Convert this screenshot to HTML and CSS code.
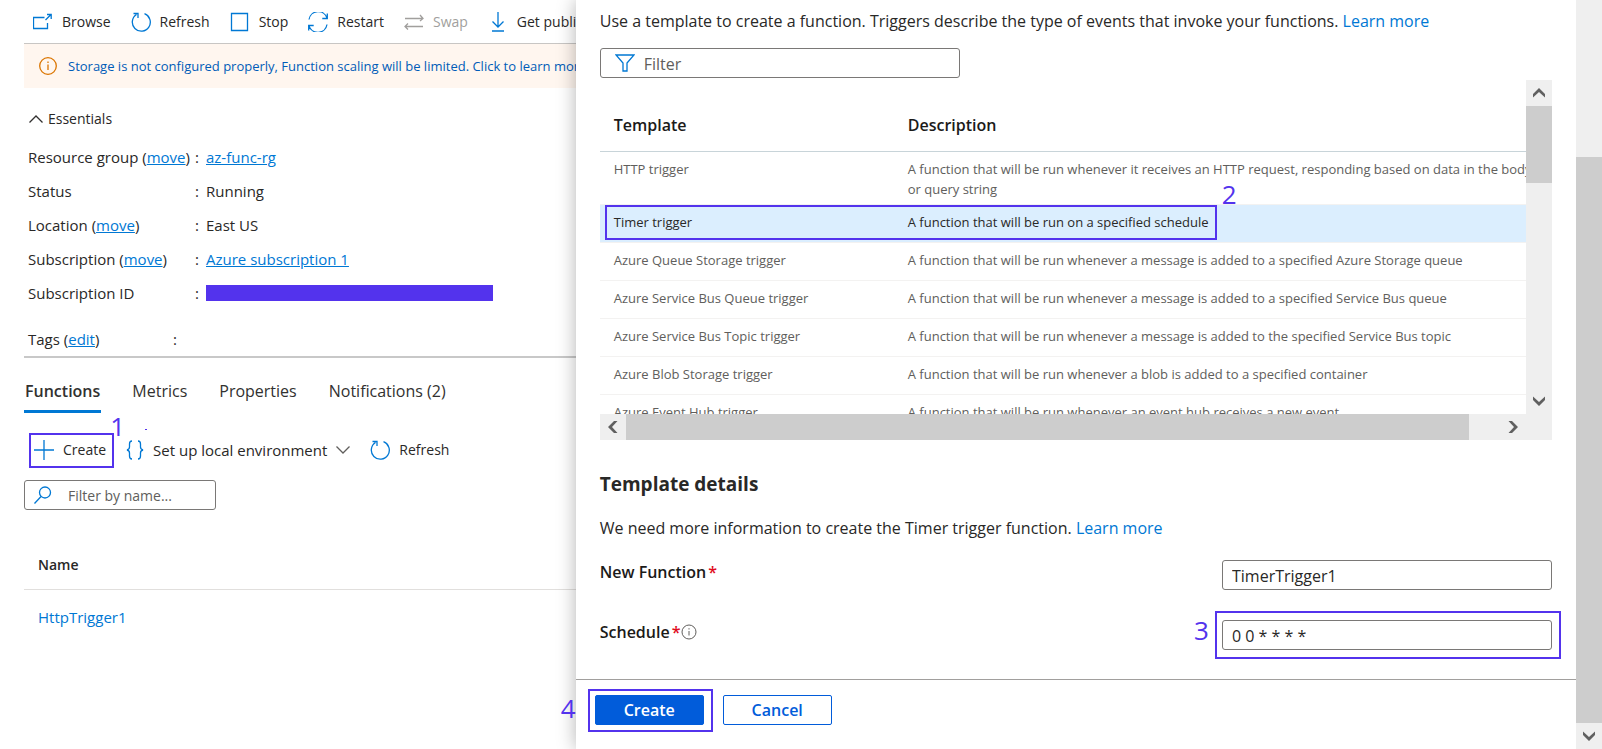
FILE: index.html
```
<!DOCTYPE html>
<html lang="en">
<head>
    <meta charset="UTF-8">
    <meta name="viewport" content="width=device-width, initial-scale=1.0">
    <title>Create function</title>
    <link rel="stylesheet" href="styles.css">
</head>
<body>
    <main class="overview">
        <div class="toolbar">
            <button class="command">
                <svg width="20" height="20" viewBox="0 0 20 20"><path d="M11.500 5.500H.500v11h14V11M12.500 8 18 2.500M14 2.500h4.200V7"/></svg>
                Browse
            </button>
            <button class="command">
                <svg width="20" height="20" viewBox="0 0 20 20"><path d="M13.500 1.700A9 9 0 1 1 5.500 2.500M2.500 1.500h4.500V6"/></svg>
                Refresh
            </button>
            <button class="command">
                <svg width="20" height="20" viewBox="0 0 20 20"><path d="M1.500 1.500h16v17h-16z"/></svg>
                Stop
            </button>
            <button class="command">
                <svg width="20" height="20" viewBox="0 0 20 20"><path d="M1 7.500a9.300 9.300 0 0 1 18-1.500M19.300 1.500V6.500h-5M19 12.500a9.300 9.300 0 0 1-18 1.500M.700 18.500V13.500h5"/></svg>
                Restart
            </button>
            <button class="command" disabled>
                <svg width="20" height="20" viewBox="0 0 20 20"><path d="M1 6.500h18M16 3l3 3.500L16 9M19 14.500H1M4 11.500l-3 3 3 3"/></svg>
                Swap
            </button>
            <button class="command">
                <svg width="20" height="20" viewBox="0 0 20 20"><path d="M10 0v15M4.500 9.500 10 15l5.500-5.500M4 19h12"/></svg>
                Get publish profile
            </button>
        </div>

        <div class="banner">
            <svg width="18" height="18" viewBox="0 0 18 18"><circle cx="9" cy="9" r="8.300"/><path d="M9 7.500V13M9 4.500v1.500"/></svg>
            <a href="#">Storage is not configured properly, Function scaling will be limited. Click to learn more</a>
        </div>

        <button class="essentials-toggle">
            <svg width="14" height="8" viewBox="0 0 14 8"><path d="M.5 7.500 7 1l6.500 6.500"/></svg>
            Essentials
        </button>
        <dl class="essentials">
            <dt>Resource group (<a href="#">move</a>)</dt>
            <dd><a href="#">az-func-rg</a></dd>
            <dt>Status</dt>
            <dd>Running</dd>
            <dt>Location (<a href="#">move</a>)</dt>
            <dd>East US</dd>
            <dt>Subscription (<a href="#">move</a>)</dt>
            <dd><a href="#">Azure subscription 1</a></dd>
            <dt>Subscription ID</dt>
            <dd><span class="redacted"></span></dd>
        </dl>
        <dl class="essentials tags">
            <dt>Tags (<a href="#">edit</a>)</dt>
            <dd></dd>
        </dl>

        <nav class="tabs">
            <a class="active" href="#">Functions</a>
            <a href="#">Metrics</a>
            <a href="#">Properties</a>
            <a href="#">Notifications (2)</a>
        </nav>

        <div class="toolbar functions-toolbar">
            <button class="command create">
                <svg width="20" height="20" viewBox="0 0 20 20"><path d="M10 0v20M0 10h20"/></svg>
                Create
                <span class="frame"></span>
                <span class="step">1</span>
            </button>
            <button class="command setup">
                <svg width="18" height="20" viewBox="0 0 18 20"><path d="M6 1C4 1 3.500 2 3.500 4v3c0 1.500-.5 2.500-2.500 3 2 .5 2.500 1.500 2.500 3v3c0 2 .5 3 2.500 3M12 1c2 0 2.500 1 2.500 3v3c0 1.500.5 2.500 2.500 3-2 .5-2.500 1.500-2.500 3v3c0 2-.5 3-2.500 3"/></svg>
                Set up local environment
                <svg class="chevron" width="14" height="8" viewBox="0 0 14 8"><path d="M.5.500 7 7 13.500.500"/></svg>
                <span class="speck"></span>
            </button>
            <button class="command">
                <svg width="20" height="20" viewBox="0 0 20 20"><path d="M13.500 1.700A9 9 0 1 1 5.500 2.500M2.500 1.500h4.500V6"/></svg>
                Refresh
            </button>
        </div>

        <label class="search">
            <svg width="18" height="18" viewBox="0 0 18 18"><circle cx="11" cy="6.500" r="5.500"/><path d="M7 10.500.500 17.500"/></svg>
            <input type="text" placeholder="Filter by name..." aria-label="Filter by name">
        </label>

        <table class="functions">
            <thead>
                <tr><th>Name</th></tr>
            </thead>
            <tbody>
                <tr><td><a href="#">HttpTrigger1</a></td></tr>
            </tbody>
        </table>
    </main>

    <section class="panel">
        <div class="panel-body">
            <p class="intro">Use a template to create a function. Triggers describe the type of events that invoke your functions. <a href="#">Learn more</a></p>
            <label class="search template-filter">
                <svg width="20" height="18" viewBox="0 0 20 18"><path d="M1 1h18l-7 8v8H8V9z"/></svg>
                <input type="text" placeholder="Filter" aria-label="Filter templates">
            </label>

            <div class="grid">
                <div class="grid-view">
                    <table class="templates">
                        <thead>
                            <tr><th class="template-col">Template</th><th>Description</th></tr>
                        </thead>
                        <tbody>
                            <tr class="two-line">
                                <td>HTTP trigger</td>
                                <td>A function that will be run whenever it receives an HTTP request, responding based on data in the body<br>or query string</td>
                            </tr>
                            <tr class="selected">
                                <td>Timer trigger</td>
                                <td>
                                    <span class="desc">A function that will be run on a specified schedule<span class="step">2</span></span>
                                    <span class="frame"></span>
                                </td>
                            </tr>
                            <tr>
                                <td>Azure Queue Storage trigger</td>
                                <td>A function that will be run whenever a message is added to a specified Azure Storage queue</td>
                            </tr>
                            <tr>
                                <td>Azure Service Bus Queue trigger</td>
                                <td>A function that will be run whenever a message is added to a specified Service Bus queue</td>
                            </tr>
                            <tr>
                                <td>Azure Service Bus Topic trigger</td>
                                <td>A function that will be run whenever a message is added to the specified Service Bus topic</td>
                            </tr>
                            <tr>
                                <td>Azure Blob Storage trigger</td>
                                <td>A function that will be run whenever a blob is added to a specified container</td>
                            </tr>
                            <tr>
                                <td>Azure Event Hub trigger</td>
                                <td>A function that will be run whenever an event hub receives a new event</td>
                            </tr>
                        </tbody>
                    </table>
                </div>
                <div class="scrollbar vertical">
                    <span class="arrow"><svg width="12" height="10" viewBox="0 0 12 10"><path d="M0 9.500V6l6-6 6 6v3.500L6 4z"/></svg></span>
                    <span class="thumb"></span>
                    <span class="arrow end"><svg width="12" height="10" viewBox="0 0 12 10"><path d="M0 .5V4l6 6 6-6V.5L6 6z"/></svg></span>
                </div>
                <div class="scrollbar horizontal">
                    <span class="arrow"><svg width="10" height="12" viewBox="0 0 10 12"><path d="M9.500 0H6L0 6l6 6h3.500L4 6z"/></svg></span>
                    <span class="thumb"></span>
                    <span class="arrow end"><svg width="10" height="12" viewBox="0 0 10 12"><path d="M.5 0H4l6 6-6 6H.5L6 6z"/></svg></span>
                </div>
            </div>

            <h2>Template details</h2>
            <p class="details">We need more information to create the Timer trigger function. <a href="#">Learn more</a></p>
            <div class="field">
                <label for="function-name">New Function<span class="required">*</span></label>
                <div class="control">
                    <input type="text" id="function-name" value="TimerTrigger1">
                </div>
            </div>
            <div class="field">
                <label for="schedule">Schedule<span class="required">*</span><svg width="16" height="16" viewBox="0 0 16 16"><circle cx="8" cy="8" r="7"/><path d="M8 7v4.500M8 4.200v1.300"/></svg></label>
                <div class="control">
                    <input type="text" id="schedule" value="0 0 * * * *">
                    <span class="frame"></span>
                    <span class="step">3</span>
                </div>
            </div>
        </div>
        <footer>
            <div class="control">
                <button class="primary">Create</button>
                <span class="frame"></span>
                <span class="step">4</span>
            </div>
            <button class="secondary">Cancel</button>
        </footer>
    </section>

    <div class="scrollbar vertical page-scrollbar">
        <span class="thumb"></span>
        <span class="arrow"><svg width="12" height="10" viewBox="0 0 12 10"><path d="M0 .5V4l6 6 6-6V.5L6 6z"/></svg></span>
    </div>
</body>
</html>
```
FILE: styles.css
```
* {
    box-sizing: border-box;
}

body {
    font-family: 'Open Sans', 'Noto Sans', sans-serif;
    font-size: 14px;
    line-height: 20px;
    color: #292827;
    background-color: #ffffff;
    margin: 0;
    display: flex;
    height: 100vh;
    overflow: hidden;
}

a {
    color: #0078d4;
    text-decoration: none;
}

button,
input {
    font: inherit;
    color: inherit;
}

button {
    background: none;
    border: none;
    padding: 0;
    cursor: pointer;
}

svg {
    flex: none;
    fill: none;
    stroke: #0078d4;
    stroke-width: 1.3;
}

/* Function app overview */
.overview {
    flex: 0 0 calc(36% - 1px);
    min-width: 0;
    padding-left: 24px;
    overflow: hidden;
    white-space: nowrap;
}

.toolbar {
    display: flex;
    align-items: center;
    gap: 20px;
    height: 44px;
    padding-left: 9px;
    border-bottom: 1px solid #c8c6c4;
}

.command {
    display: flex;
    align-items: center;
    gap: 9px;
    flex: none;
}

.command:disabled {
    color: #a19f9d;
}

.command:disabled svg {
    stroke: #a19f9d;
}

.banner {
    display: flex;
    align-items: center;
    gap: 11px;
    height: 44px;
    padding-left: 15px;
    font-size: 13px;
    background-color: #fff6ef;
}

.banner a {
    color: #015cb8;
}

.banner svg {
    stroke: #db7500;
}

.essentials-toggle {
    display: flex;
    align-items: center;
    gap: 5px;
    margin: 21px 0 11px 5px;
}

.essentials-toggle svg {
    stroke: #323130;
}

.essentials {
    display: grid;
    grid-template-columns: 167px 1fr;
    grid-auto-rows: 34px;
    align-items: center;
    margin: 0;
    padding-left: 4px;
    font-size: 15px;
}

.essentials a {
    text-decoration: underline;
}

.essentials dd {
    display: flex;
    align-items: center;
    margin: 0;
}

.essentials dd::before {
    content: ":";
    width: 11px;
}

.redacted {
    width: 287px;
    height: 16px;
    background-color: #5333ed;
}

.tags {
    grid-template-columns: 145px 1fr;
    padding-top: 12px;
    border-bottom: 2px solid #c8c8c8;
}

.tabs {
    display: flex;
    gap: 30px;
    padding-top: 17px;
    font-size: 16px;
}

.tabs a {
    padding: 6px 1px 9px;
    color: #323130;
}

.tabs .active {
    font-weight: 600;
    border-bottom: 3px solid #0078d4;
}

.functions-toolbar {
    margin-top: 15px;
    padding-left: 10px;
    border-bottom: none;
}

.create,
.setup {
    position: relative;
}

.setup {
    font-size: 15px;
}

.speck {
    position: absolute;
    left: 19px;
    top: -11px;
    width: 2px;
    height: 1px;
    background-color: #5333ed;
}

.chevron {
    stroke: #605e5c;
}

.search {
    display: flex;
    align-items: center;
    width: 192px;
    height: 30px;
    margin-top: 8px;
    padding-left: 9px;
    gap: 16px;
    border: 1px solid #7a7876;
    border-radius: 3px;
}

.search input {
    flex: 1;
    min-width: 0;
    padding: 2px 0 0;
    border: none;
    outline: none;
    background: none;
}

.search input::placeholder {
    color: #605e5c;
    opacity: 1;
}

table {
    border-collapse: collapse;
    text-align: left;
}

.functions {
    width: 100%;
    margin-top: 31px;
    font-size: 15px;
}

.functions th,
.functions td {
    padding: 14px;
    font-weight: 400;
}

.functions th {
    font-size: 14px;
    font-weight: 600;
    border-bottom: 1px solid #e1dfdd;
}

.functions td {
    padding-top: 17px;
}

/* Numbered walkthrough marks */
.frame {
    position: absolute;
    border: 2px solid #5333ed;
    pointer-events: none;
}

.step {
    position: absolute;
    font-size: 26px;
    font-weight: 400;
    line-height: 26px;
    color: #5333ed;
}

.create .frame {
    inset: -7px -8px -8px -5px;
}

.create .step {
    right: -19px;
    top: -27px;
}

/* Create function panel */
.panel {
    flex: 1;
    min-width: 0;
    display: flex;
    flex-direction: column;
    position: relative;
    background-color: #ffffff;
    box-shadow: 0 0 18px rgba(0, 0, 0, 0.3);
    font-size: 16px;
    line-height: 24px;
}

.panel-body {
    flex: 1;
    min-height: 0;
    padding: 9px 24px 0;
}

.panel p {
    margin: 0;
}

.panel .template-filter {
    width: 360px;
    margin-top: 15px;
    padding-left: 14px;
    gap: 9px;
}

.grid {
    display: grid;
    grid-template-columns: minmax(0, 1fr) 26px;
    grid-template-rows: 334px 26px;
    margin-top: 2px;
}

.grid-view {
    overflow: hidden;
}

.templates {
    width: 960px;
    font-size: 13px;
    line-height: 20px;
    color: #605e5c;
    white-space: nowrap;
}

.templates th {
    padding: 33px 14px 13px;
    font-size: 16px;
    font-weight: 600;
    line-height: 25px;
    color: #1b1a19;
    border-bottom: 1px solid #c8d4d9;
}

.template-col {
    width: 294px;
}

.templates td {
    padding: 7px 14px 10px;
    vertical-align: top;
    border-bottom: 1px solid #f3f2f1;
}

.templates .two-line td {
    padding-bottom: 5px;
}

.selected {
    position: relative;
    color: #292827;
    background-color: #dbeefe;
}

.selected .frame {
    left: 5px;
    top: 0;
    width: 612px;
    height: 35px;
}

.desc {
    position: relative;
}

.desc .step {
    right: -28px;
    top: -32px;
}

.scrollbar {
    display: flex;
    background-color: #efefef;
}

.scrollbar svg {
    fill: #606060;
    stroke: none;
}

.scrollbar.vertical {
    flex-direction: column;
}

.scrollbar.horizontal {
    grid-column: 1 / -1;
    padding-right: 26px;
}

.arrow {
    display: flex;
    align-items: center;
    justify-content: center;
    width: 26px;
    height: 26px;
}

.arrow.end {
    margin-left: auto;
}

.vertical .arrow.end {
    margin: auto 0 0;
}

.thumb {
    background-color: #cdcdcd;
}

.grid .vertical .thumb {
    height: 77px;
}

.grid .horizontal .thumb {
    width: 91%;
}

.panel h2 {
    margin: 31px 0 19px;
    font-size: 19px;
    font-weight: 700;
    line-height: 26px;
}

.panel .details {
    margin-bottom: 20px;
}

.field {
    display: flex;
    justify-content: space-between;
    height: 60px;
}

.field label {
    display: flex;
    align-items: center;
    height: 24px;
    font-weight: 600;
    color: #1b1a19;
}

.field label svg {
    stroke: #605e5c;
    stroke-width: 1;
    margin-left: 1px;
}

.required {
    margin-left: 2px;
    color: #e00b1c;
}

.control {
    position: relative;
}

.field .control {
    flex: 0 0 330px;
}

.control input {
    width: 100%;
    height: 30px;
    padding: 2px 9px 0;
    border: 1px solid #7a7876;
    border-radius: 3px;
}

.field .frame {
    left: -7px;
    right: -9px;
    top: -9px;
    height: 48px;
}

.field .step {
    left: -28px;
    top: -3px;
}

footer {
    display: flex;
    gap: 19px;
    height: 70px;
    padding: 15px 19px;
    border-top: 1px solid #a19f9d;
}

footer button {
    width: 109px;
    height: 30px;
    font-weight: 600;
    border: 1px solid #015cda;
    border-radius: 2px;
}

.primary {
    color: #ffffff;
    background-color: #015cda;
}

.secondary {
    color: #015cda;
}

footer .frame {
    inset: -6px -9px 2px -7px;
}

footer .step {
    left: -34px;
    top: 0;
}

.page-scrollbar {
    position: relative;
    flex: 0 0 26px;
    padding-top: 157px;
}

.page-scrollbar .thumb {
    flex: 1;
}
```
